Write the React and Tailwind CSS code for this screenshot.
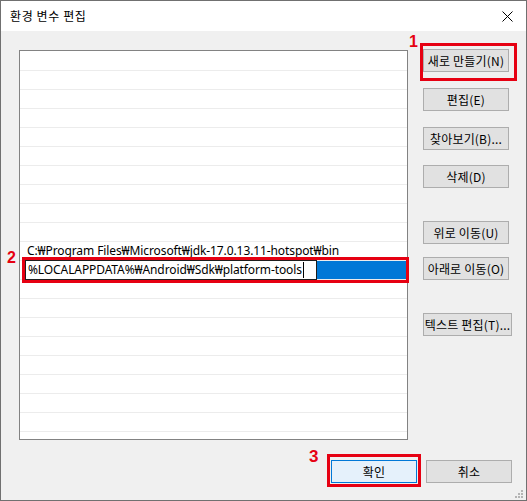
import React from "react";

const FONT = { fontFamily: '"Noto Sans", "Noto Sans CJK KR", sans-serif' };
const KFONT = { fontFamily: '"Noto Sans CJK KR", "Noto Sans", sans-serif' };
const NUM = { fontFamily: '"Liberation Sans", sans-serif' };

function Btn({ children, className = "", primary = false }) {
  return (
    <div
      className={
        "h-[23px] flex items-center justify-center text-[12px] text-black whitespace-nowrap tracking-[0.2px] " +
        (primary
          ? "border border-[#0078d7] bg-[#e5f1fb] "
          : "border border-[#adadad] bg-[#e1e1e1] ") +
        className
      }
      style={KFONT}
    >
      {children}
    </div>
  );
}

export default function App() {
  const rows = Array.from({ length: 21 }, (_, i) => i);
  return (
    <div
      className="relative w-[527px] h-[501px] border border-[#707070] flex flex-col overflow-hidden bg-[#f0f0f0]"
      style={FONT}
    >
      {/* Title bar */}
      <div className="h-[30px] bg-white flex items-center justify-between pl-[9px] pr-[13px] shrink-0">
        <span className="text-[12px] text-black tracking-[0.6px]" style={KFONT}>
          환경 변수 편집
        </span>
        <svg width="11" height="11" viewBox="0 0 11 11">
          <path d="M0.5 0.5 L10.5 10.5 M10.5 0.5 L0.5 10.5" stroke="#000" strokeWidth="1" />
        </svg>
      </div>

      {/* Body */}
      <div className="flex-1 flex flex-col pt-[19px] pl-[18px] pr-[14px]">
        <div className="flex">
          {/* List */}
          <div className="w-[392px] h-[390px] border border-[#828282] bg-white overflow-hidden pt-[1px]">
            {rows.map((i) => (
              <div
                key={i}
                className="h-[19px] border-b border-[#ececec] pl-[7px] flex items-center text-[12px] text-black whitespace-nowrap tracking-[-0.1px]"
              >
                {i === 10 ? "C:₩Program Files₩Microsoft₩jdk-17.0.13.11-hotspot₩bin" : ""}
              </div>
            ))}
          </div>

          {/* Right buttons */}
          <div className="ml-[15px] flex flex-col">
            <Btn className="w-[86px] mt-[-1px]">새로 만들기(N)</Btn>
            <Btn className="w-[86px] mt-[16px]">편집(E)</Btn>
            <Btn className="w-[86px] mt-[16px]">찾아보기(B)...</Btn>
            <Btn className="w-[86px] mt-[15px]">삭제(D)</Btn>
            <Btn className="w-[86px] mt-[33px]">위로 이동(U)</Btn>
            <Btn className="w-[86px] mt-[13px]">아래로 이동(O)</Btn>
            <Btn className="w-[89px] mt-[33px]">텍스트 편집(T)...</Btn>
          </div>
        </div>

        {/* Bottom buttons */}
        <div className="flex justify-end gap-[9px] mt-[20px]">
          <Btn primary className="w-[86px]">확인</Btn>
          <Btn className="w-[86px]">취소</Btn>
        </div>
      </div>

      {/* Edit overlay for selected row */}
      <div className="absolute left-[21px] top-[256px] w-[387px] h-[26px] border-[3px] border-[#e60012] flex">
        <div className="w-[292px] h-[20px] border border-[#1e1e1e] bg-white flex items-center pl-[2px] text-[12px] text-black whitespace-nowrap tracking-[-0.1px]">
          <span>%LOCALAPPDATA%₩Android₩Sdk₩platform-tools</span>
          <span className="ml-[1px] w-[1px] h-[16px] bg-black" />
        </div>
        <div className="flex-1 my-[1px] bg-[#0078d7]" />
      </div>

      {/* Annotation frames */}
      <div className="absolute left-[419px] top-[42px] w-[97px] h-[38px] border-[3px] border-[#e60012]" />
      <div className="absolute left-[326px] top-[453px] w-[94px] h-[33px] border-[3px] border-[#e60012]" />

      {/* Annotation numbers */}
      <div className="absolute left-[408px] top-[33px] text-[16px] font-bold leading-none text-[#e60012]" style={NUM}>1</div>
      <div className="absolute left-[6px] top-[249px] text-[16px] font-bold leading-none text-[#e60012]" style={NUM}>2</div>
      <div className="absolute left-[308px] top-[447px] text-[17px] font-bold leading-none text-[#e60012]" style={NUM}>3</div>

      {/* Resize grip */}
      <svg className="absolute left-[513px] top-[488px]" width="10" height="10" viewBox="0 0 10 10">
        <rect x="7" y="1" width="2" height="2" fill="#b4b4b4" />
        <rect x="4" y="4" width="2" height="2" fill="#b4b4b4" />
        <rect x="7" y="4" width="2" height="2" fill="#b4b4b4" />
        <rect x="1" y="7" width="2" height="2" fill="#b4b4b4" />
        <rect x="4" y="7" width="2" height="2" fill="#b4b4b4" />
        <rect x="7" y="7" width="2" height="2" fill="#b4b4b4" />
      </svg>
    </div>
  );
}
